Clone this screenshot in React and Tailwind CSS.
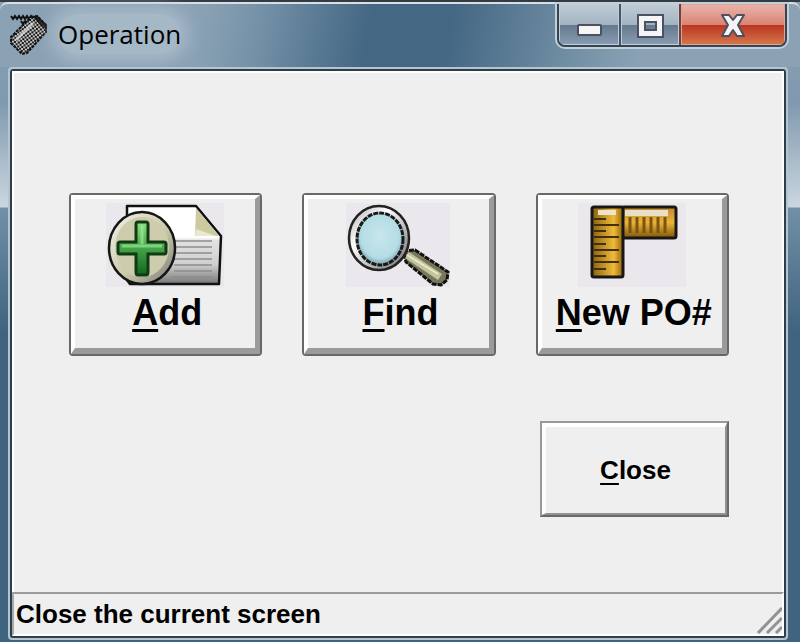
import React from "react";

function OperationIcon() {
  return (
    <svg className="h-11 w-10 shrink-0" viewBox="0 0 40 44" aria-hidden="true">
      <defs>
        <pattern id="mesh" width="4" height="4" patternUnits="userSpaceOnUse" patternTransform="rotate(8)">
          <rect width="4" height="4" fill="#c4c4c4" />
          <rect width="2" height="2" fill="#111" />
          <rect x="2" y="2" width="2" height="2" fill="#222" />
        </pattern>
      </defs>
      <path d="M1 4l2 3 2-3 2 3 2-3 2 3 2-3 2 3 2-3 2 3 2-3 2 3M11 9l2 3 2-3 2 3 2-3" fill="none" stroke="#111" strokeWidth="2" />
      <path d="M21 5l6-1 9 9v7L17 41l-5 1L1 31v-6z" fill="url(#mesh)" />
      <path d="M21 5l6-1 9 9v7L17 41l-5 1L1 31v-6z" fill="none" stroke="#111" strokeWidth="2" strokeDasharray="3 1" />
      <path d="M6 28L23 11" stroke="#e6e6e6" strokeWidth="3" opacity=".7" />
      <path d="M22 4h6l9 9v5L31 14z" fill="#111" opacity=".85" />
    </svg>
  );
}

function AddIcon() {
  return (
    <svg className="h-[84px] w-[118px]" viewBox="0 0 118 84" aria-hidden="true">
      <defs>
        <linearGradient id="page" x1="0" y1="0" x2="0" y2="1">
          <stop offset=".4" stopColor="#fff" />
          <stop offset=".44" stopColor="#e2e2e2" />
          <stop offset=".75" stopColor="#cfcfcf" />
          <stop offset="1" stopColor="#777" />
        </linearGradient>
        <linearGradient id="disc" x1="0" y1="0" x2="1" y2="1">
          <stop offset="0" stopColor="#f4f4ee" />
          <stop offset=".55" stopColor="#cbcaa8" />
          <stop offset="1" stopColor="#777" />
        </linearGradient>
        <linearGradient id="plus" x1="0" y1="0" x2="0" y2="1">
          <stop offset="0" stopColor="#8ee07f" />
          <stop offset=".5" stopColor="#43a447" />
          <stop offset="1" stopColor="#12651f" />
        </linearGradient>
      </defs>
      <rect width="118" height="84" fill="#ebe8ed" />
      <path d="M21 3h69l25 30-2 48H24l-3-4z" fill="url(#page)" stroke="#111" strokeWidth="2.500" strokeLinejoin="round" />
      <path d="M90 5l23 28H89z" fill="#cbcb9f" />
      <path d="M90 26l20 7H89z" fill="#e9e9cf" />
      <path d="M68 38h38M68 44h38M68 50h38M68 56h38M68 62h38M68 68h38M66 74h40" stroke="#8d8d8d" strokeWidth="1.500" />
      <ellipse cx="36" cy="45" rx="33" ry="36" fill="url(#disc)" stroke="#151515" strokeWidth="2.500" />
      <ellipse cx="36" cy="44" rx="27" ry="30" fill="#cdccac" />
      <path d="M32 19h8q2 0 2 2v18h16q2 0 2 2v8q0 2-2 2H42v18q0 3-2 3h-8q-2 0-2-3V51H14q-2 0-2-2v-8q0-2 2-2h16V21q0-2 2-2z" fill="url(#plus)" stroke="#103914" strokeWidth="3" />
      <path d="M36 22v19M16 43h40" fill="none" stroke="#a5eda1" strokeWidth="3" opacity=".6" />
    </svg>
  );
}

function FindIcon() {
  return (
    <svg className="h-[84px] w-[104px]" viewBox="0 0 104 84" aria-hidden="true">
      <defs>
        <radialGradient id="lens" cx=".5" cy=".45" r=".6">
          <stop offset="0" stopColor="#c8e6ec" />
          <stop offset=".7" stopColor="#b4dce4" />
          <stop offset="1" stopColor="#5d8790" />
        </radialGradient>
        <linearGradient id="rim" x1="0" y1="0" x2="1" y2="1">
          <stop offset="0" stopColor="#aaa" />
          <stop offset=".35" stopColor="#fff" />
          <stop offset="1" stopColor="#666" />
        </linearGradient>
      </defs>
      <rect width="104" height="84" fill="#ebe8ed" />
      <path d="M57 48l12-1 33 22-1 8-6 5-8-1-27-22z" fill="#77775b" stroke="#111" strokeWidth="3" strokeDasharray="5 1" />
      <path d="M61 52l33 22" stroke="#c4c49c" strokeWidth="7" />
      <path d="M61 52l31 19" stroke="#e8e8cc" strokeWidth="2" />
      <ellipse cx="33" cy="35" rx="30" ry="32" fill="url(#rim)" stroke="#222" strokeWidth="2.500" />
      <ellipse cx="34" cy="36" rx="23" ry="26" fill="url(#lens)" stroke="#191919" strokeWidth="3" strokeDasharray="5 1" />
    </svg>
  );
}

function RulerIcon() {
  return (
    <svg className="h-[84px] w-[108px]" viewBox="0 0 108 84" aria-hidden="true">
      <defs>
        <linearGradient id="vertical" x1="0" y1="0" x2="1" y2="0">
          <stop offset="0" stopColor="#8a6211" />
          <stop offset=".7" stopColor="#efbb38" />
          <stop offset="1" stopColor="#94620c" />
        </linearGradient>
        <linearGradient id="horizontal" x1="0" y1="0" x2="0" y2="1">
          <stop offset="0" stopColor="#be882a" />
          <stop offset=".5" stopColor="#e9b33a" />
          <stop offset="1" stopColor="#80560b" />
        </linearGradient>
      </defs>
      <rect width="108" height="84" fill="#ebe8ed" />
      <rect x="44" y="4" width="54" height="31" rx="2" fill="url(#horizontal)" stroke="#171717" strokeWidth="3" />
      <path d="M47 7h43v6H47z" fill="#e8dfc9" />
      <path d="M52 14v16M59 14v16M66 14v16M73 14v16M80 14v16M87 14v16" stroke="#7d540e" strokeWidth="3" />
      <rect x="14" y="4" width="31" height="70" rx="2" fill="url(#vertical)" stroke="#171717" strokeWidth="3" />
      <path d="M20 7h18v5H20z" fill="#eee2c8" />
      <path d="M16 16h12M16 22h25M16 28h12M16 34h25M16 41h12M16 47h25M16 53h12M16 59h25M16 66h12" stroke="#433009" strokeWidth="2" />
    </svg>
  );
}

const glass =
  "flex justify-center border-r-2 bg-[linear-gradient(to_bottom,#c0ccd5,#a3b4c1_50%,#62788c_50%,#8a9db3)] shadow-[inset_0_0_0_1px_#c2ced7]";

function WindowControls() {
  return (
    <div className="mr-[13px] flex h-[43px] w-[230px] shrink-0 overflow-hidden rounded-b-lg border-2 border-t-0 border-[#344654] shadow-[0_0_0_2px_#c4d0d9]">
      <button aria-label="Minimize" className={`${glass} w-[62px] items-center border-[#42566a]`}>
        <svg width="28" height="32" viewBox="0 0 28 32"><rect x="3" y="16" width="23" height="10" rx="1" fill="#f5f5f5" stroke="#4b5062" strokeWidth="2" /></svg>
      </button>
      <button aria-label="Maximize" className={`${glass} w-[60px] items-center border-[#6d4141]`}>
        <svg width="28" height="26" viewBox="0 0 28 26"><path d="M2 3h25v22H2zM9 10v8h11v-8z" fill="#f5f5f5" fillRule="evenodd" stroke="#4b5062" strokeWidth="2" /></svg>
      </button>
      <button aria-label="Close window" className="flex flex-1 items-center justify-center bg-[linear-gradient(to_bottom,#ebb5ae,#d98474_50%,#b93420_50%,#d5784c)] shadow-[inset_0_0_0_1px_#e1a396]">
        <svg width="28" height="26" viewBox="0 0 28 26"><path d="M3 3h7l4 5 4-5h7l-6 10 6 11h-7l-4-6-4 6H3l6-11z" fill="#f5f5f5" stroke="#4b5062" strokeWidth="2" strokeLinejoin="round" /></svg>
      </button>
    </div>
  );
}

function TaskButton({ icon, first, rest }) {
  return (
    <button className="flex h-[163px] min-w-0 flex-1 rounded border-2 border-[#686868]">
      <span className="flex h-full w-full flex-col items-center border-t-4 border-r-[5px] border-b-[6px] border-l-4 border-t-white border-r-[#9b9b9b] border-b-[#9b9b9b] border-l-white pt-1">
        {icon}
        <span className="mt-1.5 pl-1 text-4xl leading-10 font-bold whitespace-nowrap">
          <span className="underline decoration-3 underline-offset-4">{first}</span>{rest}
        </span>
      </span>
    </button>
  );
}

export default function App() {
  return (
    <main className="flex min-h-screen flex-col border-t-2 border-[#333b43] bg-[linear-gradient(to_bottom,#8ba2b5_0px,#8099ae_100px,#cbd6df_205px,#7190a7_206px,#40637f_330px,#40637f_100%)] pr-3 pb-0.5 pl-2 font-['Liberation_Sans',Arial,sans-serif] text-black">
      <header className="-mr-3 -ml-2 flex h-[65px] shrink-0 items-start justify-between rounded-t-lg border-t-2 border-[#d8dfe6] bg-[linear-gradient(100deg,#8ba2b5,#8ba2b5_25%,#7592a8_32%,#446783_46%,#446783_56%,#6d8ba1_70%,#8ba2b5_80%)] pl-2.5">
        <div className="flex items-center gap-2 pt-2">
          <OperationIcon />
          <h1 className="rounded-full bg-[#b5c6d2]/60 font-['Open_Sans','Noto_Sans',sans-serif] text-[26px] leading-10 shadow-[0_0_16px_8px_#b5c6d299]">Operation</h1>
        </div>
        <WindowControls />
      </header>
      <section className="flex flex-1 flex-col rounded border-2 border-[#b5c5d0]">
        <div className="flex flex-1 flex-col rounded-sm border-2 border-[#2d3e4b] bg-[#efefef]">
          <div className="flex flex-1 flex-col border-2 border-b-0 border-white pt-[120px] pr-[53px] pl-[55px]">
            <div className="flex gap-10">
              <TaskButton icon={<AddIcon />} first="A" rest="dd" />
              <TaskButton icon={<FindIcon />} first="F" rest="ind" />
              <TaskButton icon={<RulerIcon />} first="N" rest="ew PO#" />
            </div>
            <button className="mt-[65px] h-[96px] w-[189px] self-end border-2 border-t-[#999] border-r-[#686868] border-b-[#686868] border-l-[#999]">
              <span className="flex h-full items-center justify-center border-t-4 border-r-2 border-b-2 border-l-4 border-t-white border-r-[#929292] border-b-[#929292] border-l-white text-[26px] font-bold">
                <span><span className="underline decoration-2 underline-offset-4">C</span>lose</span>
              </span>
            </button>
          </div>
          <footer className="flex h-11 items-center justify-between border-2 border-t-[#9b9b9b] border-r-white border-b-white border-l-[#aaa] pl-0.5">
            <span className="text-[26px] leading-8 font-bold">Close the current screen</span>
            <svg className="self-end" width="26" height="28" viewBox="0 0 26 28" aria-hidden="true"><path d="M2 27L26 2M11 27l15-15M20 27l6-6" stroke="#929292" strokeWidth="3" /></svg>
          </footer>
        </div>
      </section>
    </main>
  );
}
